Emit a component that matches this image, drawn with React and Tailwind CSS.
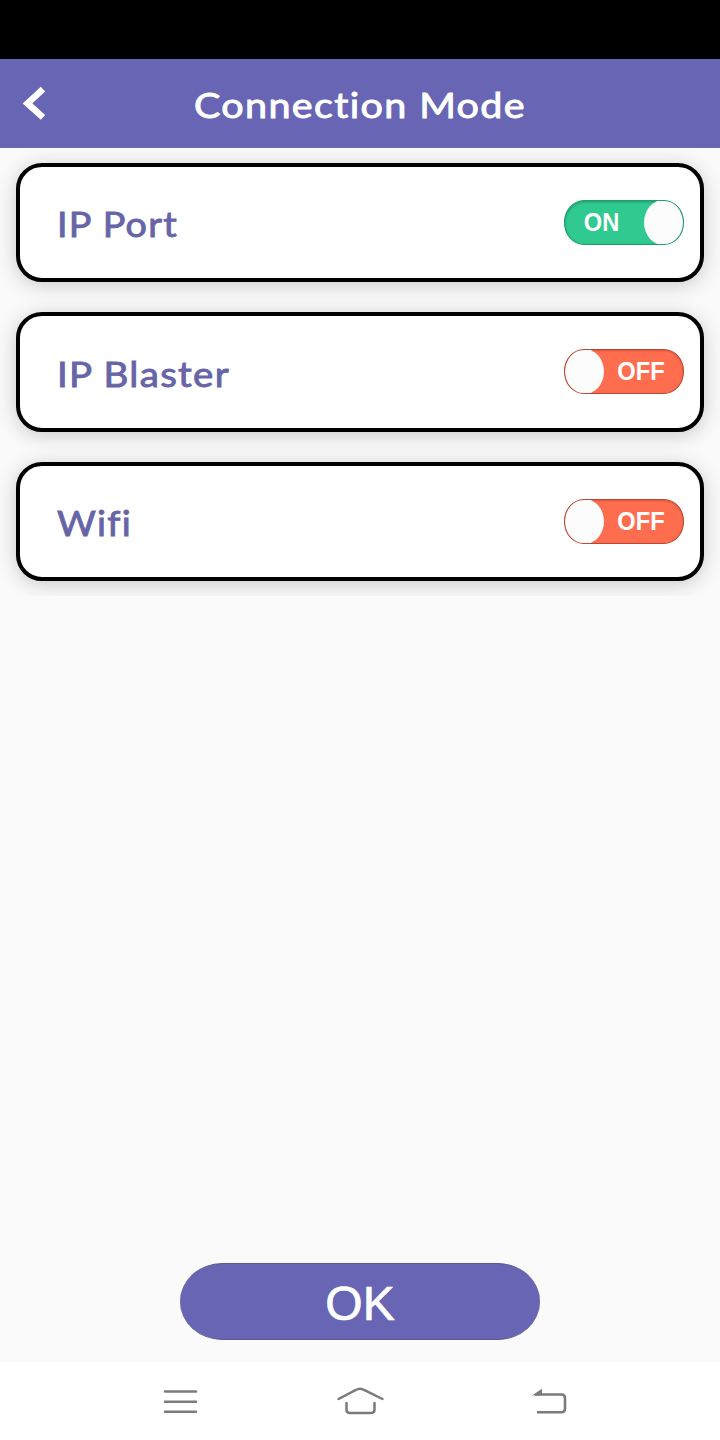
import { useState } from 'react';

const modes = [
  { id: 'port', label: 'IP Port', width: 'w-[121px]', length: 121 },
  { id: 'blaster', label: 'IP Blaster', width: 'w-[173px]', length: 173 },
  { id: 'wifi', label: 'Wifi', width: 'w-[76px]', length: 75 },
];

function Toggle({ on, onClick, label }) {
  return (
    <button
      type="button"
      role="switch"
      aria-checked={on}
      aria-label={label}
      onClick={onClick}
      className={`flex h-[45px] w-[120px] items-center overflow-hidden rounded-[20px/22px] border text-[26px] font-bold text-white ${
        on
          ? 'flex-row border-[#259c70] bg-[#30ca90] shadow-[inset_0_1px_3px_#1c9666]'
          : 'flex-row-reverse border-[#b64a38] bg-[#ff6d4f] shadow-[inset_0_1px_2px_#d9543b]'
      }`}
    >
      <span className="flex flex-1 justify-center">
        <span className="-translate-x-[3px] scale-x-[0.91]">{on ? 'ON' : 'OFF'}</span>
      </span>
      <span className="h-[45px] w-[39px] shrink-0 rounded-[50%] bg-[#fcfcfc]" />
    </button>
  );
}

export default function App() {
  const [active, setActive] = useState('port');

  return (
    <div className="flex h-[1440px] w-[720px] flex-col bg-[#fafafa] font-['Liberation_Sans',sans-serif]">
      {/* Status bar */}
      <div className="h-[59px] shrink-0 bg-black" />

      {/* Header */}
      <header className="flex h-[89px] shrink-0 items-center border-b border-[#6d6ba4] bg-[#6866b4] text-white">
        <button type="button" aria-label="Back" className="ml-[22px] w-[26px]">
          <svg width="26" height="34" viewBox="0 0 26 34" fill="none">
            <path d="M21 3.2 5.5 17.4 21 31.4" stroke="currentColor" strokeWidth="6.5" />
          </svg>
        </button>
        <h1 className="mr-12 flex flex-1 justify-center pt-[3px] font-['Lato',sans-serif] text-[35px] leading-none font-normal">
          <svg width="336" height="44" viewBox="0 0 336 44" className="overflow-visible">
            <text
              x="2"
              y="35"
              textLength="332"
              lengthAdjust="spacingAndGlyphs"
              fill="currentColor"
              stroke="currentColor"
              strokeWidth="0.9"
              className="tracking-[1.2px]"
            >
              Connection Mode
            </text>
          </svg>
        </h1>
      </header>

      {/* Connection modes */}
      <main className="flex h-[448px] shrink-0 flex-col gap-[30px] overflow-hidden px-4 pt-[14.5px]">
        {modes.map((mode) => (
          <div
            key={mode.id}
            className="flex h-[119.5px] shrink-0 items-center justify-between rounded-[26px] border-4 border-black bg-white pr-4 pl-[37px] shadow-[0_3px_20px_rgba(0,0,0,0.2)]"
          >
            <span className="font-['Lato',sans-serif] text-[35px] font-normal text-[#6765a7]">
              <svg height="44" className={`${mode.width} overflow-visible`}>
                <text
                  x="0"
                  y="37"
                  textLength={mode.length}
                  lengthAdjust="spacingAndGlyphs"
                  fill="currentColor"
                  stroke="currentColor"
                  strokeWidth="0.9"
                  className="tracking-[1.2px]"
                >
                  {mode.label}
                </text>
              </svg>
            </span>
            <Toggle on={active === mode.id} label={mode.label} onClick={() => setActive(mode.id)} />
          </div>
        ))}
      </main>

      {/* Confirm */}
      <div className="mt-auto flex justify-center pb-[22px]">
        <button
          type="button"
          className="flex h-[77px] w-[360px] items-center justify-center rounded-[43px/39px] border-y border-[#5a5793] bg-[#6866b4] pt-[5px] text-[48px] text-white"
        >
          <span className="[-webkit-text-stroke:0.7px_white]">OK</span>
        </button>
      </div>

      {/* Navigation bar */}
      <nav className="flex h-[78px] shrink-0 items-center bg-white pl-[162px] text-[#7b7b7b]">
        <svg width="38" height="30" viewBox="0 0 38 30" fill="none" stroke="currentColor" strokeWidth="2.6" strokeLinecap="round">
          <path d="M3 5.5h31M3 15.7h31M3 25.8h31" />
        </svg>
        <svg className="ml-[135px]" width="50" height="30" viewBox="0 0 50 30" fill="none" stroke="currentColor" strokeWidth="2.5" strokeLinecap="round" strokeLinejoin="round">
          <path d="M3.5 13 20.5 4.2q4.5-2.7 9 0L47.5 13" />
          <path d="M11.5 17v6.5q0 3.5 3.5 3.5h21q3.5 0 3.5-3.5v-6.5" />
        </svg>
        <svg className="ml-[146px]" width="38" height="30" viewBox="0 0 38 30" fill="none" stroke="currentColor" strokeWidth="2.6">
          <path d="M4 8.5h26.5q3.5 0 3.5 3.5v10.5q0 3.8-3.5 3.8H6" />
          <path d="M1 9.5 11 2.7v6.5Z" fill="currentColor" stroke="none" />
        </svg>
      </nav>
    </div>
  );
}
